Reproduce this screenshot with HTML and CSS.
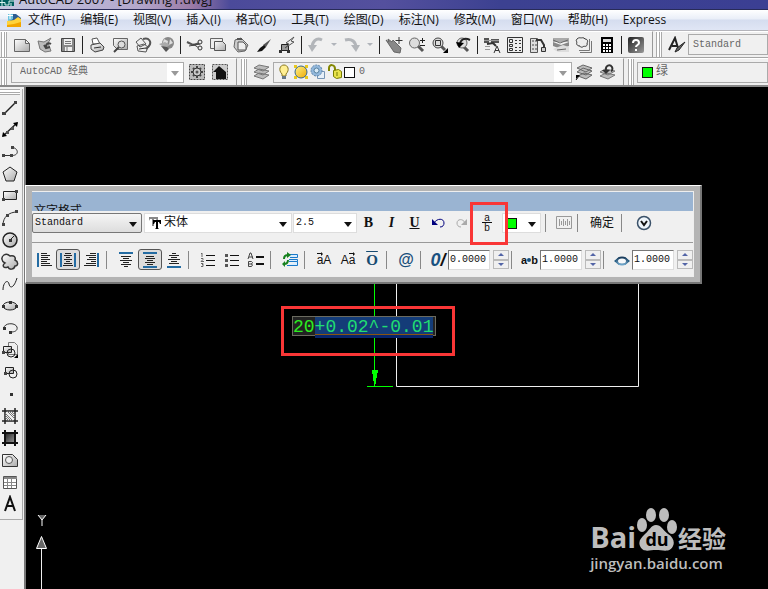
FILE: index.html
```html
<!DOCTYPE html>
<html lang="zh-CN">
<head>
<meta charset="utf-8">
<title>AutoCAD 2007</title>
<link rel="stylesheet" href="styles.css">
</head>
<body>
<svg class="defs" aria-hidden="true">
  <defs>
    <linearGradient id="metal" x1="0" y1="0" x2="1" y2="1"><stop offset="0" stop-color="#fff"/><stop offset="1" stop-color="#aaa"/></linearGradient>
    <linearGradient id="dark" x1="0" y1="0" x2="1" y2="1"><stop offset="0" stop-color="#222"/><stop offset="1" stop-color="#999"/></linearGradient>
    <linearGradient id="steel" x1="0" y1="0" x2="0" y2="1"><stop offset="0" stop-color="#1b3d5c"/><stop offset="1" stop-color="#6ba3c8"/></linearGradient>
    <linearGradient id="gold" x1="0" y1="0" x2="1" y2="1"><stop offset="0" stop-color="#fff38c"/><stop offset="1" stop-color="#eda800"/></linearGradient>
  </defs>
</svg>
<header class="titlebar">
  <svg class="app-logo" viewBox="0 0 14 7"><path fill="#005f5f" d="M0 0h14v7H0z"/><path fill="none" stroke="#d8f2f0" d="M0 3.500h5V6h4V2h5M2 0v7M11 4v3"/></svg>
  <span class="title-text">AutoCAD 2007 - [Drawing1.dwg]</span>
</header>
<nav class="menubar" aria-label="菜单">
  <svg class="doc-logo" viewBox="0 0 16 16"><path fill="#2d5c92" d="M3 2h7l5 4v6H3z"/><path fill="#6dc3df" d="M2 2h5v5l-5 3z"/><path fill="#ffd33c" d="M1 9l7-1 4-3 3 2v7H1z"/><path fill="#f2a500" d="M1 13l7-1 7-2v5H1z"/><path stroke="#fff" d="M4 0v7M1 3.500h6"/></svg>
  <button>文件(F)</button><button>编辑(E)</button><button>视图(V)</button><button>插入(I)</button><button>格式(O)</button><button>工具(T)</button><button>绘图(D)</button><button>标注(N)</button><button>修改(M)</button><button>窗口(W)</button><button>帮助(H)</button><button>Express</button>
</nav>
<div class="toolrow">
  <div class="toolbar">
    <span class="grip"></span>
    <button aria-label="新建"><svg viewBox="0 0 18 18"><path fill="url(#metal)" stroke="#666" d="M1.500 3.500h11l4 4v8h-15zM12.500 3.500v4h4"/></svg></button>
    <button aria-label="打开"><svg viewBox="0 0 18 18"><path fill="#bbb" stroke="#777" d="M2 5l6 1 7-4-3 5 3 8-6 1-5-3z"/><path fill="none" stroke="#444" stroke-width="2" d="M15 8c-3-2-5 0-5 3M8 9l2 3 4-1"/></svg></button>
    <button aria-label="保存"><svg viewBox="0 0 18 18"><path fill="#888" stroke="#444" d="M2.500 2.500h13v13h-13z"/><path fill="#eee" d="M5 3h8v6H5zM6 11h7v4H6z"/><path stroke="#777" d="M6 5.500h6M6 7.500h6M8 11v4"/></svg></button>
    <i class="sep"></i>
    <button aria-label="打印"><svg viewBox="0 0 18 18"><path fill="#fff" stroke="#555" d="M5 8L4 3l5-1 3 6z"/><path fill="url(#metal)" stroke="#444" d="M3 9l9-2 4 4-1 3-8 2-4-3z"/><path stroke="#333" d="M6 12l7-1"/></svg></button>
    <button aria-label="打印预览"><svg viewBox="0 0 18 18"><path fill="url(#metal)" stroke="#666" d="M2.500 2.500h14v11h-10l-4-4z"/><path stroke="#444" stroke-width="2" d="M8 11l-5 5"/><circle cx="10.500" cy="8.500" r="3.500" fill="#ddd" stroke="#555"/></svg></button>
    <button aria-label="发布"><svg viewBox="0 0 18 18"><path fill="#eee" stroke="#555" d="M2 6l5-4 5 6-6 3zM3 10l7-2 4 3-2 5-8-1z"/><path fill="none" stroke="#555" stroke-width="2" d="M9 3c6-2 9 3 6 7l-3 3"/><path stroke="#333" d="M5 13l7-1"/></svg></button>
    <button aria-label="三维发布"><svg viewBox="0 0 18 18"><circle cx="11" cy="7" r="6" fill="#888"/><path fill="#ddd" d="M7 3l4 2-1 5-5-1zM13 3l3 4-4 2z"/><path fill="#aaa" d="M2 8l6-2 5 3-5 3z"/><path fill="#555" d="M4 10l5 6 3-3-2-2z"/></svg></button>
    <i class="sep"></i>
    <button aria-label="剪切"><svg viewBox="0 0 18 18"><path stroke="#555" stroke-width="2" d="M1 6l6 3 7-2"/><path stroke="#444" d="M3 10l11-2M7 8l6 4"/><circle cx="14" cy="6" r="2" fill="#eee" stroke="#333"/><circle cx="14" cy="12" r="2" fill="#eee" stroke="#333"/></svg></button>
    <button aria-label="复制"><svg viewBox="0 0 18 18"><path fill="#eee" stroke="#666" d="M1.500 2.500h12v10h-12z"/><path fill="url(#metal)" stroke="#555" d="M5.500 5.500h8l3 3v6h-11z"/></svg></button>
    <button aria-label="粘贴"><svg viewBox="0 0 18 18"><path fill="#ccc" stroke="#666" d="M3 4l6-2 7 7-3 6-7 1-4-5z"/><path fill="#eee" stroke="#555" d="M6 6h5l3 3v5H6z"/><path stroke="#555" stroke-width="2" d="M5 3h5"/></svg></button>
    <button aria-label="特性匹配"><svg viewBox="0 0 18 18"><path fill="#555" d="M16 3l-5 8-3-2z"/><path fill="#111" d="M9 9l2 2-4 4-5 1 3-4z"/></svg></button>
    <button aria-label="块编辑器"><svg viewBox="0 0 18 18"><path fill="#999" stroke="#222" d="M3.500 8.500h7v6h-7z"/><path fill="#eee" stroke="#555" d="M16 1L8 7l3 1-4 4 9-6-3-1z"/><path fill="#333" d="M1 14h3v3H1zM9 14h3v3H9z"/></svg></button>
    <i class="sep"></i>
    <button aria-label="放弃"><svg viewBox="0 0 18 18"><path fill="none" stroke="#b2b5b9" stroke-width="3" d="M15 4C9 1 5 6 5 12"/><path fill="#b2b5b9" d="M1 9h9l-5 7z"/></svg></button>
    <button class="caret" aria-label="放弃列表"></button>
    <button aria-label="重做"><svg viewBox="0 0 18 18"><path fill="none" stroke="#b2b5b9" stroke-width="3" d="M2 4c7-2 11 2 11 8"/><path fill="#b2b5b9" d="M8 9h9l-4 7z"/></svg></button>
    <button class="caret" aria-label="重做列表"></button>
    <i class="sep"></i>
    <button aria-label="实时平移"><svg viewBox="0 0 18 18"><path fill="#888" stroke="#666" d="M1 4l3 2-1-3 4 3 1-2 8 8-1 5-6-1z"/><path stroke="#333" d="M14 1v7M10.500 4.500h7"/></svg></button>
    <button aria-label="实时缩放"><svg viewBox="0 0 18 18"><path stroke="#555" stroke-width="3" d="M10 10l5 5"/><circle cx="6.500" cy="7" r="5" fill="#ddd" stroke="#666"/><path stroke="#222" d="M12 4.500h5M14.500 2v5M12 9.500h5"/></svg></button>
    <button aria-label="窗口缩放"><svg viewBox="0 0 18 18"><path stroke="#555" stroke-width="3" d="M10 10l4 4"/><circle cx="7" cy="7" r="5" fill="#ddd" stroke="#444"/><path fill="none" stroke="#333" d="M4.500 4.500h5v5h-5z"/><path d="M17 12v5h-5z"/></svg></button>
    <button aria-label="缩放上一个"><svg viewBox="0 0 18 18"><path stroke="#555" stroke-width="3" d="M9 10l5 5"/><circle cx="8" cy="7" r="5" fill="#ddd" stroke="#666"/><path fill="none" stroke="#222" stroke-width="2" d="M6 9c0-5 4-8 10-5"/><path d="M2 6l8 1-5 5z"/></svg></button>
    <i class="sep"></i>
    <button aria-label="特性"><svg viewBox="0 0 18 18"><path fill="#555" d="M1 2h5v5H1zM8 3h8v4H8z"/><path stroke="#999" d="M1 4.500h15M2 10.500h5M2 13.500h5"/><path fill="none" stroke="#333" stroke-width="2" d="M4 8l6-1 3 3"/><path stroke="#333" d="M11 17l3-7 3 7M12 14.500h4"/></svg></button>
    <button aria-label="设计中心"><svg viewBox="0 0 18 18"><path fill="#eee" stroke="#333" d="M1.500 1.500h15v15h-15z"/><path stroke="#333" d="M3.500 3.500h3v3h-3zM3.500 8.500h3v2h-3zM3.500 12.500h3v2h-3zM9 4.500h2M13 4.500h2M9 7.500h2M13 7.500h2M9 11.500h2M13 11.500h2M9 14.500h2M13 14.500h2"/></svg></button>
    <button aria-label="工具选项板"><svg viewBox="0 0 18 18"><path fill="#ddd" stroke="#555" d="M1.500 2.500h7v14h-7z"/><path stroke="#444" stroke-dasharray="2 2" d="M4 4v12M7 4v12"/><path fill="none" stroke="#333" stroke-width="2" d="M7 4h5l3 5v4"/><path fill="#ccc" stroke="#333" d="M12.500 11.500h4v4h-4z"/></svg></button>
    <button aria-label="图纸集"><svg viewBox="0 0 18 18"><path fill="#aaa" d="M1 2h16v4H1z"/><path fill="#888" d="M1 6l8 3 8-3v4l-8 3-8-3z"/><path fill="#ddd" d="M1 13l10-4 6 2v5H6z"/><path stroke="#666" d="M1 4l7 3 8-3M5 14l9-1"/></svg></button>
    <button aria-label="标记集"><svg viewBox="0 0 18 18"><path fill="none" stroke="#777" d="M5 16.500h11.500V5M4 14.500h10.500V3"/><path fill="#eee" stroke="#333" d="M2 3c2-2 4-1 4-1s3-1 4 1c3 0 3 3 2 4 1 3-2 4-3 3-2 2-4 1-4 0-3 0-4-2-3-4-1-1-1-2 0-3z"/></svg></button>
    <button aria-label="计算器"><svg viewBox="0 0 18 18"><path d="M3 1h12v16H3z"/><path fill="#ddd" d="M5 3h8v3H5z"/><path stroke="#fff" stroke-width="2" stroke-dasharray="2 1" d="M5 9h8M5 12h8M5 15h8"/></svg></button>
    <i class="sep"></i>
    <button aria-label="帮助"><svg viewBox="0 0 18 18"><rect x="1" y="1" width="16" height="16" rx="2" fill="url(#dark)"/><path fill="none" stroke="#fff" stroke-width="2" d="M6 7c0-4 6-4 6 0 0 2-3 2-3 4M9 13v2"/></svg></button>
  </div>
  <div class="toolbar grow">
    <span class="grip"></span>
    <button aria-label="文字样式"><svg viewBox="0 0 18 18"><path fill="none" stroke="#222" stroke-width="2" d="M1 14L7 2l3 10M4 10h6"/><path fill="#666" stroke="#222" d="M17 6l-6 8-4 2 2-4z"/></svg></button>
    <div class="combo grow-combo"><span class="value">Standard</span></div>
  </div>
</div>
<div class="toolrow second">
  <div class="toolbar workspace">
    <span class="grip"></span>
    <div class="select-box work"><select aria-label="工作空间"><option>AutoCAD 经典</option></select><i class="arrow"></i></div>
    <button aria-label="工作空间设置"><svg viewBox="0 0 18 18"><path fill="#bbb" stroke="#444" stroke-dasharray="2 1" d="M1.500 1.500h15v15h-15z"/><path stroke="#444" stroke-width="2" d="M9 3v12M3 9h12M5 5l8 8M13 5l-8 8"/><circle cx="9" cy="9" r="4" fill="#ccc" stroke="#333"/><circle cx="9" cy="9" r="1.500" fill="#555"/></svg></button>
    <button aria-label="我的工作空间"><svg viewBox="0 0 18 18"><path fill="#ccc" stroke="#555" stroke-dasharray="2 1" d="M1.500 1.500h15v15h-15z"/><path fill="#111" d="M2 9l6-6 7 6v7H5V9z"/></svg></button>
  </div>
  <div class="toolbar layers">
    <span class="grip"></span>
    <button aria-label="图层"><svg viewBox="0 0 18 18"><path fill="#bbb" stroke="#777" d="M1 13l5-3 10 2-6 4zM1 9l5-3 10 2-6 4zM1 5l5-3 10 2-6 4z"/></svg></button>
    <div class="combo layer-combo">
      <svg viewBox="0 0 16 16"><path fill="#ffef93" stroke="#887720" d="M6 10C2 6 4 1 8 1s6 5 2 9v2H6z"/><path fill="#678" d="M6 12h4v3H6z"/></svg>
      <svg viewBox="0 0 16 16"><path fill="#eac91b" d="M1 1h3v3H1zM12 1h3v3h-3zM1 12h3v3H1zM12 12h3v3h-3z"/><circle cx="8" cy="8" r="6" fill="url(#gold)" stroke="#37678b"/></svg>
      <svg viewBox="0 0 16 16"><path fill="#e7f0f8" stroke="#7795b5" d="M7.500 7.500h7v7h-7z"/><circle cx="6.500" cy="6.500" r="5.500" fill="#92b7db" stroke="#5b84aa" stroke-dasharray="2 1"/><circle cx="6.500" cy="6.500" r="2.500" fill="#d7e9f7" stroke="#57819f"/></svg>
      <svg viewBox="0 0 16 16"><path fill="none" stroke="#838600" stroke-width="2" d="M2 7V4c0-4 6-4 6 1v3"/><path fill="#e8e34b" stroke="#777c00" d="M6.500 6.500l5-1 3 2v6l-5 1-3-2zM10 8v4"/></svg>
      <i class="swatch white"></i><span class="value">0</span><i class="arrow"></i>
    </div>
    <button aria-label="置为当前"><svg viewBox="0 0 18 18"><path fill="#bbb" stroke="#666" d="M3 13l6-3 8 2-6 4zM2 9l6-4 9 3-6 4zM2 5l6-3 9 3-6 4z"/><path d="M1 12h4l-4 4z"/><path stroke="#111" d="M1 17l3-4"/></svg></button>
    <button aria-label="上一个图层"><svg viewBox="0 0 18 18"><path fill="#bbb" stroke="#777" d="M2 13l6-3 9 2-7 4zM2 9l5-3 10 2-7 4z"/><path fill="none" stroke="#333" stroke-width="2" d="M8 8c-1-6 4-7 6-4 1 2 0 4-1 4"/><path fill="#333" d="M4 7h8l-4 4z"/></svg></button>
  </div>
  <div class="toolbar grow">
    <span class="grip"></span>
    <div class="combo grow-combo color-combo"><i class="swatch green"></i><span class="value">绿</span></div>
  </div>
</div>
<main class="workspace-area">
  <aside class="dock">
    <div class="palette">
      <span class="hgrip"></span>
      <button aria-label="直线"><svg viewBox="0 0 18 18"><path stroke="#222" stroke-width="1.500" d="M3 15L15 3"/><path fill="#444" d="M1 13h4v3H1zM13 2h3v3h-3z"/></svg></button>
      <button aria-label="构造线"><svg viewBox="0 0 18 18"><path stroke="#222" stroke-width="1.500" d="M2 15L16 2"/><path d="M1 16l1-5 4 4zM17 1l-5 1 4 4z"/><path fill="#555" d="M5 10h3v3H5zM10 6h3v3h-3z"/></svg></button>
      <button aria-label="多段线"><svg viewBox="0 0 18 18"><path fill="none" stroke="#333" d="M2 12.500h9c8 0 6-8 0-8"/><path fill="#444" d="M1 11h3v3H1zM9 11h3v3H9zM10 3h3v3h-3z"/></svg></button>
      <button aria-label="正多边形"><svg viewBox="0 0 18 18"><path fill="url(#metal)" stroke="#222" d="M9 2l7 5-3 9H5L2 7z"/></svg></button>
      <button aria-label="矩形"><svg viewBox="0 0 18 18"><path fill="url(#metal)" stroke="#222" d="M2.500 4.500h13v8h-13z"/><path fill="#444" d="M1 11h3v3H1zM14 3h3v3h-3z"/></svg></button>
      <button aria-label="圆弧"><svg viewBox="0 0 18 18"><path fill="none" stroke="#333" d="M2 16C2 8 8 3 16 3"/><path fill="#444" d="M1 14h3v3H1zM5 5h3v3H5zM14 1h3v3h-3z"/></svg></button>
      <button aria-label="圆"><svg viewBox="0 0 18 18"><circle cx="9" cy="9" r="7" fill="url(#metal)" stroke="#222" stroke-width="1.500"/><path stroke="#222" d="M9 9l4-4"/><path fill="#333" d="M8 8h3v3H8z"/></svg></button>
      <button aria-label="修订云线"><svg viewBox="0 0 18 18"><path fill="url(#metal)" stroke="#333" stroke-width="1.500" d="M3 2c3-2 5 0 6 1 4-1 6 1 5 4 4 2 3 6 0 6-1 4-6 4-7 1-5 2-6-2-3-4-4-2-4-6-1-8z"/></svg></button>
      <button aria-label="样条曲线"><svg viewBox="0 0 18 18"><path fill="none" stroke="#222" d="M2 15c0-8 5-11 6-6s5 4 8-6"/></svg></button>
      <button aria-label="椭圆"><svg viewBox="0 0 18 18"><ellipse cx="9" cy="9" rx="7" ry="4" fill="url(#metal)" stroke="#222"/><path fill="#333" d="M1 8h3v3H1zM8 4h3v3H8zM14 8h3v3h-3z"/></svg></button>
      <button aria-label="椭圆弧"><svg viewBox="0 0 18 18"><path fill="none" stroke="#333" d="M3 9C3 4 14 3 16 8c1 4-3 5-6 5"/><path fill="#333" d="M2 8h3v3H2zM8 12h3v3H8z"/></svg></button>
      <button aria-label="插入块"><svg viewBox="0 0 18 18"><path fill="#eee" stroke="#777" d="M7.500 1.500h6l3 3v9h-9z"/><path fill="url(#metal)" stroke="#222" d="M2.500 5.500h8v6h-8z"/><circle cx="10" cy="12" r="4" fill="none" stroke="#222"/><path fill="#444" d="M1 10h3v3H1z"/><path d="M17 13v4h-4z"/></svg></button>
      <button aria-label="创建块"><svg viewBox="0 0 18 18"><path fill="url(#metal)" stroke="#222" d="M4.500 4.500h8v6h-8z"/><circle cx="12" cy="11" r="4" fill="none" stroke="#222"/><path fill="#444" d="M3 9h3v3H3z"/></svg></button>
      <button aria-label="点"><svg viewBox="0 0 18 18"><path fill="#333" d="M9 8h3v3H9z"/></svg></button>
      <button aria-label="图案填充"><svg viewBox="0 0 18 18"><path stroke="#222" stroke-width="1.500" d="M4 1v16M14 1v16M1 4h16M1 14h16"/><path stroke="#777" d="M4 6l8 8M4 10l4 4M6 4l8 8M10 4l4 4M4 8l6 6M8 4l6 6"/></svg></button>
      <button aria-label="渐变色"><svg viewBox="0 0 18 18"><path fill="url(#dark)" d="M4 4h10v10H4z"/><path stroke="#111" stroke-width="2" d="M4 1v16M14 1v16M1 4h16M1 14h16"/></svg></button>
      <button aria-label="面域"><svg viewBox="0 0 18 18"><path fill="url(#metal)" stroke="#333" d="M1.500 3.500h10l5 5v7h-15z"/><circle cx="8" cy="9" r="3.500" fill="#eee" stroke="#555"/></svg></button>
      <button aria-label="表格"><svg viewBox="0 0 18 18"><path fill="#fff" stroke="#555" d="M2.500 3.500h13v12h-13z"/><path fill="#888" d="M3 4h13v2H3z"/><path stroke="#888" d="M3 9.500h12M3 12.500h12M6.500 6v9M10.500 6v9"/></svg></button>
      <button aria-label="多行文字"><svg viewBox="0 0 18 18"><path fill="none" stroke="#111" stroke-width="2" d="M4 16L9 2l5 14M6 11h7"/></svg></button>
    </div>
  </aside>
  <section class="canvas" aria-label="绘图区">
    <svg class="drawing" viewBox="0 0 742 502">
      <path fill="none" stroke="#eee" d="M370.500 196v103.500h242V196M15.500 502v-40"/>
      <path fill="none" stroke="#0f0" d="M348.500 196v103M341 299.500h26"/><path fill="#0f0" d="M346 283h6v3h-1v5h-1v6h-2v-3h-1v-7h-1z"/>
      <path fill="#666" stroke="#fff" d="M15.500 449.500l5 12h-10zM12 428l4 5 4-5M16 433v6"/>
    </svg>
    <div class="mtext"><span>20</span><mark>+0.02^-0.01</mark></div>
    <div class="highlight text-highlight"></div>
    <div class="format-panel">
      <div class="panel-body">
        <div class="panel-title">文字格式</div>
        <div class="format-row top">
          <div class="select-box style"><select aria-label="样式"><option>Standard</option></select><i class="arrow"></i></div>
          <div class="select-box font"><svg viewBox="0 0 14 14"><path fill="#888" d="M1 1h9v4H9L8 3H6v7H4V3H2L1 5z"/><path d="M5 4h8v4h-1l-1-2h-1v6l1 1H7l1-1V6H7L6 8H5z"/></svg><select aria-label="字体"><option>宋体</option></select><i class="arrow"></i></div>
          <div class="select-box size"><select aria-label="文字高度"><option>2.5</option></select><i class="arrow"></i></div>
          <div class="letters"><button class="b">B</button><button class="it">I</button><button class="u">U</button>
          <button aria-label="放弃"><svg viewBox="0 0 18 18"><path fill="none" stroke="#00007d" d="M5 9c3-5 10-5 10 0 0 2-1 4-4 4"/><path fill="#00007d" d="M3 5v6h6z"/></svg></button>
          <button aria-label="重做"><svg viewBox="0 0 18 18"><path fill="none" stroke="#aaa" d="M13 9C11 4 5 5 5 9c0 2 1 4 4 4"/><path fill="#aaa" d="M15 5v6H9z"/></svg></button></div>
          <button class="fraction" aria-label="堆叠"><span>a</span><span>b</span></button>
          <div class="select-box color"><i class="swatch green"></i><select aria-label="颜色"><option></option></select><i class="arrow"></i></div>
          <i class="divider"></i>
          <button class="ruler" aria-label="标尺"><svg viewBox="0 0 18 18"><path fill="none" stroke="#999" d="M1.500 2.500h15v12h-15zM4.500 5v7M6.500 7v4M8.500 5v7M10.500 7v4M12.500 5v7M14.500 7v4"/></svg></button>
          <i class="divider"></i><button class="ok">确定</button><i class="divider"></i>
          <button class="options" aria-label="选项"><svg viewBox="0 0 18 18"><circle cx="9" cy="9" r="6.500" fill="#edf4fa" stroke="#3a5169" stroke-width="1.500"/><path fill="none" stroke="#111" stroke-width="2" d="M6 7l3 4 3-4"/></svg></button>
        </div>
        <div class="format-row bottom">
          <button aria-label="左对齐"><svg viewBox="0 0 18 18"><path stroke="#246ca3" stroke-width="2" d="M3 2v14"/><path stroke="#222" d="M6 2.500h6M6 4.500h9M6 6.500h7M6 8.500h9M6 10.500h6M6 12.500h9M6 14.500h11"/></svg></button>
          <button class="active" aria-label="居中对齐"><svg viewBox="0 0 18 18"><path stroke="#246ca3" stroke-width="2" d="M2 2v14M16 2v14"/><path stroke="#222" d="M6 2.500h6M5 4.500h8M7 6.500h4M5 8.500h8M7 10.500h4M5 12.500h8M4 14.500h10"/></svg></button>
          <button aria-label="右对齐"><svg viewBox="0 0 18 18"><path stroke="#246ca3" stroke-width="2" d="M15 2v14"/><path stroke="#222" d="M7 2.500h6M3 4.500h10M6 6.500h7M4 8.500h9M8 10.500h5M3 12.500h10M1 14.500h12"/></svg></button>
          <i class="divider"></i>
          <button aria-label="上对齐"><svg viewBox="0 0 18 18"><path stroke="#246ca3" stroke-width="2" d="M2 2h14"/><path stroke="#222" d="M4 5.500h10M6 7.500h6M3 9.500h12M6 11.500h6M4 13.500h10M7 15.500h4"/></svg></button>
          <button class="active" aria-label="中央对齐"><svg viewBox="0 0 18 18"><path stroke="#246ca3" stroke-width="2" d="M2 2h14M2 16h14"/><path stroke="#222" d="M5 5.500h8M4 7.500h10M6 9.500h6M4 11.500h10M6 13.500h6"/></svg></button>
          <button aria-label="下对齐"><svg viewBox="0 0 18 18"><path stroke="#246ca3" stroke-width="2" d="M2 16h14"/><path stroke="#222" d="M7 2.500h4M4 4.500h10M6 6.500h6M3 8.500h12M6 10.500h6M4 12.500h10"/></svg></button>
          <i class="divider"></i>
          <button aria-label="编号"><svg viewBox="0 0 18 18"><path stroke="#111" d="M7 4.500h9M7 9.500h9M7 14.500h9"/><path fill="none" stroke="#666" d="M2 3l1-1v4M2 7.500h2v1l-2 2h3M2 12.500h2v1H3h1v2H2"/></svg></button>
          <button aria-label="项目符号"><svg viewBox="0 0 18 18"><path stroke="#111" d="M7 4.500h9M7 9.500h9M7 14.500h9"/><path fill="#555" d="M2 3h3v3H2zM2 8h3v3H2zM2 13h3v3H2z"/></svg></button>
          <button aria-label="大写字母"><svg viewBox="0 0 18 18"><path stroke="#111" stroke-width="2" d="M9 6h8M9 13h8"/><path fill="none" stroke="#444" d="M1 8l2-6h1l2 6M2 6h4M1.500 10.500h3l1 1-1 1.500 1 1-1 1.500h-3zM2 13h3"/></svg></button>
          <i class="divider"></i>
          <button aria-label="插入字段"><svg viewBox="0 0 18 18"><path fill="#d9edff" stroke="#1979c9" d="M8 3.500h8.500v3H9M8 8.500h8.500v2H8M6 14.500h10.500v-4"/><path fill="none" stroke="#16811e" stroke-width="2" d="M3 8c0-3 2-4 4-4M7 9c0 3-2 4-4 4"/><path fill="#16811e" d="M6 1l4 3-4 3zM4 10v6l-3-3z"/></svg></button>
          <i class="divider"></i>
          <button aria-label="大写" class="case up">aA</button><button aria-label="小写" class="case low">Aa</button><button class="over" aria-label="上划线">O</button>
          <i class="divider"></i><button class="at">@</button><i class="divider"></i>
          <label class="icon-label oblique" for="oblique">0<span>/</span></label><input id="oblique" value="0.0000"><span class="spin"><button aria-label="增加"></button><button aria-label="减少"></button></span>
          <i class="divider"></i>
          <label class="icon-label tracking" for="tracking">a<i></i>b</label><input id="tracking" value="1.0000"><span class="spin"><button aria-label="增加"></button><button aria-label="减少"></button></span>
          <i class="divider"></i>
          <label class="icon-label" for="widthf"><svg viewBox="0 0 18 18"><path fill="#235b82" d="M1 10l5-4v8zM17 10l-5-4v8z"/><ellipse cx="9" cy="10" rx="5" ry="3.500" fill="#f6f8fa" stroke="url(#steel)" stroke-width="2"/></svg></label><input id="widthf" value="1.0000" aria-label="宽度比例"><span class="spin"><button aria-label="增加"></button><button aria-label="减少"></button></span>
        </div>
      </div>
    </div>
    <div class="highlight stack-highlight"></div>
    <div class="watermark">
      <div class="brand"><span>Bai</span><svg viewBox="0 0 42 46"><g fill="#bdbdbd"><ellipse cx="6" cy="19" rx="5" ry="7"/><ellipse cx="15" cy="9" rx="5" ry="7"/><ellipse cx="28" cy="9" rx="5" ry="7"/><ellipse cx="36" cy="21" rx="5" ry="7"/><path d="M20 19c5 0 7 5 12 9 5 3 7 8 5 12-3 7-10 4-17 4s-13 3-16-4c-2-5 1-8 5-12 4-3 6-9 11-9z"/></g><text x="21" y="40" text-anchor="middle">du</text></svg><span class="cn">经验</span></div>
      <div class="url">jingyan.baidu.com</div>
    </div>
  </section>
</main>
</body>
</html>
```
FILE: styles.css
```css
* { box-sizing: border-box; }
body { margin: 0; min-height: 100vh; display: flex; flex-direction: column; overflow: hidden; background: #f0f0f0; color: #111; font: 12px/16px "Open Sans", "Noto Sans CJK SC", sans-serif; }
button { padding: 0; border: 0; background: none; color: inherit; font: inherit; display: flex; align-items: center; justify-content: center; flex: none; }
svg { display: block; flex: none; }
path[stroke]:not([fill]) { fill: none; }
.defs { position: absolute; width: 0; height: 0; }
.titlebar { height: 10px; padding-bottom: 3px; display: flex; align-items: flex-end; gap: 5px; overflow: hidden; background: linear-gradient(90deg, #c4c7df 0, #b3a8cc 18%, #9b7aa6 25%, #4b4a9a 30%, #54509e 50%, #3c4191 65%, #3b3f93 100%); border-bottom: 1px solid #282b58; }
.app-logo { width: 14px; height: 7px; }
.title-text { font-size: 13px; line-height: 14px; white-space: pre; }
.menubar { height: 21px; display: flex; align-items: center; gap: 15px; padding-left: 6px; background: linear-gradient(#fff 0, #e9eef8 45%, #d5ddef 50%, #e0e6f5 100%); border-bottom: 1px solid #b5b5bb; }
.menubar button { white-space: nowrap; }
.doc-logo { width: 16px; height: 16px; margin-right: -9px; }
.toolrow { height: 27px; display: flex; gap: 2px; background: #f0f0f0; border-bottom: 1px solid #a5a5a5; }
.toolrow.second { height: 29px; border-bottom: 2px solid #888; }
.toolbar { display: flex; align-items: center; padding-right: 5px; border-top: 1px solid #fff; border-right: 1px solid #999; }
.toolbar.grow { flex: 1; border-right: 0; padding-right: 0; }
.grip { width: 6px; margin: 0 3px 0 1px; align-self: stretch; border: solid #aaa; border-width: 0 1px; background: linear-gradient(90deg, #fff 0 2px, #aaa 2px 3px, #fff 3px); }
.toolbar > button { width: 23px; height: 24px; }
.toolbar svg { width: 18px; height: 18px; }
.toolbar > .caret { width: 13px; }
.caret::before { content: ""; border: 3px solid transparent; border-top-color: #b0b4ba; border-bottom: 0; }
.sep { width: 6px; height: 18px; flex: none; background: linear-gradient(90deg, transparent 3px, #222 3px 4px, transparent 4px); }
.combo { display: flex; align-items: center; border: 1px solid #aaa; background: #f0f0f0; height: 21px; }
.value, select, input { font: 10px/16px "Liberation Mono", "Noto Sans CJK SC", monospace; color: #666; }
.grow-combo { flex: 1; padding-left: 4px; }
.select-box { position: relative; display: flex; align-items: center; height: 21px; border: 1px solid #aaa; background: #f0f0f0; }
.select-box select { appearance: none; flex: 1; min-width: 0; border: 0; background: none; padding: 0 2px; height: 19px; }
.arrow { position: absolute; right: 4px; top: 8px; border: 4px solid transparent; border-top: 5px solid #111; border-bottom: 0; pointer-events: none; }
.work { width: 175px; margin: 0 1px; background: linear-gradient(90deg, #f0f0f0 155px, #fff 155px); }
.select-box.work select { padding-left: 8px; }
.work .arrow, .layer-combo .arrow { border-top-color: #999; }
.second { gap: 3px; }
.second .workspace { width: 237px; }
.layers { width: 384px; }
.layers .layer-combo { flex: 1; position: relative; background: linear-gradient(90deg, #f0f0f0 280px, #fff 280px); padding-left: 2px; gap: 1px; margin: 0; }
.layers .layer-combo svg { width: 16px; height: 16px; }
.swatch { width: 11px; height: 11px; border: 1px solid #111; flex: none; }
.white { background: #fff; margin-right: 3px; }
.green { background: #0f0; }
.color-combo { gap: 3px; }
.color-combo .value { font-size: 12px; }
.workspace-area { flex: 1; display: flex; min-height: 0; }
.dock { width: 26px; flex: none; border-right: 2px solid #777; background: #f0f0f0; }
.palette { width: 23px; border: solid #aaa; border-width: 0 1px 1px 0; padding-bottom: 4px; }
.hgrip { display: block; height: 6px; margin: 2px 2px 2px 0; border: solid #aaa; border-width: 1px 0; background: linear-gradient(#fff 0 2px, #aaa 2px 3px, #fff 3px); }
.palette button { width: 20px; height: 22px; }
.palette svg { width: 18px; height: 18px; }
.canvas { flex: 1; min-width: 0; position: relative; background: #000; }
.drawing { position: absolute; left: 0; top: 0; width: 742px; height: 502px; }
.mtext { position: absolute; left: 266px; top: 229px; height: 20px; padding-right: 2px; border: 1px solid #6b6b60; background: #222; color: #2ced20; font: 18px/20px "Liberation Mono", monospace; display: flex; }
.mtext mark { color: #20dd72; background: #143c78; border-bottom: 1px solid #8a5510; box-shadow: 0 3px #08246b; }
.highlight { position: absolute; border: 3px solid #f93636; pointer-events: none; }
.text-highlight { left: 255px; top: 219px; width: 174px; height: 50px; }
.stack-highlight { left: 444px; top: 115px; width: 38px; height: 43px; }
.format-panel { position: absolute; left: -1px; top: 98px; width: 677px; padding: 5px 6px; border: 1px solid #fff; border-right: 2px solid #777; border-bottom: 2px solid #777; background: #b4b4b4; }
.panel-body { border: 1px solid #eee; border-left-width: 0; background: #f0f0f0; }
.panel-title { height: 19px; padding: 10px 2px 0; overflow: hidden; background: #9ab4d2; line-height: 18px; }
.format-row { display: flex; align-items: center; }
.top { height: 32px; padding-bottom: 7px; border-bottom: 1px solid #999; }
.top .select-box { background: #fff; border-color: #ddd; height: 20px; }
.top select, .bottom input { color: #111; }
.top .style { width: 110px; border: 1px solid #777; border-radius: 2px; background: linear-gradient(#f5f5f5, #ddd); margin-right: 2px; }
.top .font { width: 148px; margin-right: 1px; padding-left: 3px; }
.font svg { width: 14px; height: 14px; }
.font select { font-size: 12px; }
.top .size { width: 64px; }
.letters { display: flex; }
.letters button { width: 23px; height: 22px; font: bold 14px/18px "Liberation Serif", serif; }
.letters svg { width: 18px; height: 18px; }
.letters .it { font-style: italic; }
.letters .u { text-decoration: underline; }
.fraction { width: 30px; flex-direction: column; font: 10px/9px "Liberation Sans", sans-serif; }
.fraction span { height: 10px; }
.fraction span:first-child { border-bottom: 1px solid #111; width: 10px; }
.top .color { width: 39px; padding-left: 3px; margin-right: 2px; }
.divider { width: 10px; height: 18px; flex: none; background: linear-gradient(90deg, transparent 2px, #888 2px 3px, transparent 3px); }
.ruler { width: 22px; }
.ruler svg, .options svg { width: 18px; height: 18px; }
.ok { width: 34px; }
.options { width: 30px; }
.bottom { height: 33px; }
.bottom > button { width: 24px; height: 21px; }
.bottom svg { width: 18px; height: 18px; }
.bottom .active { border: 1px solid #555; border-radius: 3px; background: #ddd; }
.bottom .case { position: relative; font: 12px/18px "Liberation Sans", sans-serif; }
.case::before { content: ""; position: absolute; top: 4px; width: 5px; height: 1px; background: #111; }
.case::after { content: ""; position: absolute; top: 3px; border: 2px solid transparent; border-left-color: #111; border-right: 0; }
.up::before { left: 5px; }
.up::after { left: 9px; }
.low::before { left: 13px; }
.low::after { left: 17px; }
.bottom .over { font: bold 15px/18px "Liberation Serif", serif; color: #174b70; text-decoration: overline; }
.bottom .at { font: bold 16px/18px "Liberation Sans", sans-serif; color: #194f7b; }
.icon-label { width: 21px; display: flex; align-items: center; justify-content: center; flex: none; font: bold 11px/18px "Liberation Sans", sans-serif; }
.oblique { width: 20px; color: #195180; font: italic bold 18px/20px "Liberation Sans", sans-serif; }
.oblique span { color: #111; }
.tracking i { width: 4px; height: 4px; border-radius: 2px; background: #195180; }
.bottom input { width: 42px; height: 20px; min-width: 0; padding: 0 1px; border: 1px solid #777; border-right-color: #ddd; border-bottom-color: #ddd; background: #fff; flex: none; }
.spin { width: 16px; height: 19px; margin-left: 3px; flex: none; display: grid; grid-template-rows: 1fr 1fr; }
.spin button { border: 1px solid #bbb; }
.spin button::before { content: ""; border: 3px solid transparent; border-bottom-color: #5365a7; border-top: 0; }
.spin button + button::before { transform: rotate(180deg); }
.watermark { position: absolute; right: 42px; bottom: 15px; color: #bdbdbd; }
.brand { display: flex; align-items: flex-end; justify-content: flex-end; height: 46px; }
.brand span { font: bold 29px/30px "Open Sans", sans-serif; }
.brand svg { width: 42px; height: 46px; }
.brand text { fill: #000; font: bold 18px "Open Sans", sans-serif; }
.brand .cn { font: bold 24px/28px "Noto Sans CJK SC", sans-serif; }
.url { font: 600 15px/22px "Open Sans", sans-serif; }
```
